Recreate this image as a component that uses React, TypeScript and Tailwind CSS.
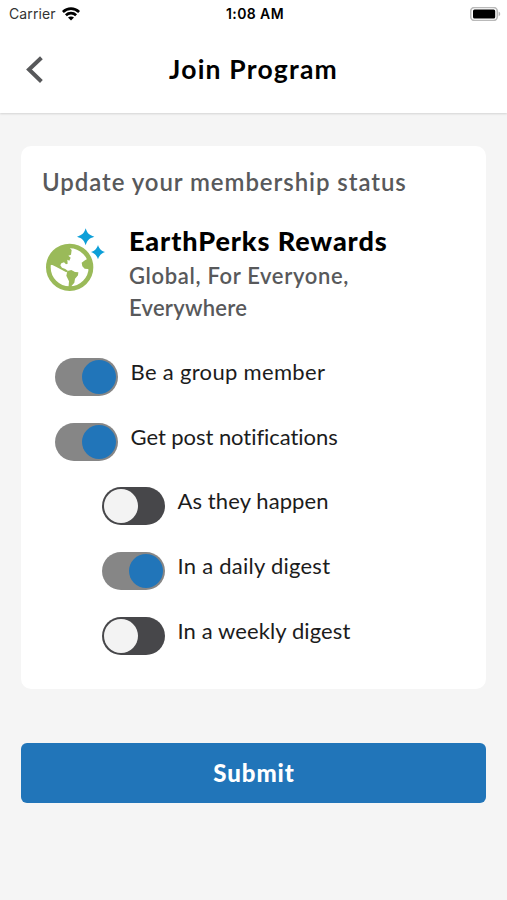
import { useState } from "react";

type Option = {
  id: string;
  label: string;
  nested?: boolean;
  spacing: string;
};

const options: Option[] = [
  { id: "member", label: "Be a group member", spacing: "tracking-[0.32px]" },
  { id: "posts", label: "Get post notifications", spacing: "tracking-[-0.05px]" },
  { id: "instant", label: "As they happen", nested: true, spacing: "tracking-[0.1px]" },
  { id: "daily", label: "In a daily digest", nested: true, spacing: "tracking-[0.25px]" },
  { id: "weekly", label: "In a weekly digest", nested: true, spacing: "tracking-[0.1px]" },
];

function StatusBar() {
  return (
    <div className="grid h-[27px] grid-cols-3 items-center pl-[9px] pr-[6px] font-['Inter',sans-serif] text-[14px] text-black">
      <div className="flex items-center gap-[6px] text-[#333]">
        <span className="tracking-[0.1px]">Carrier</span>
        <svg className="h-[14px] w-[18px]" viewBox="0 0 18 14" fill="none" stroke="#000" strokeWidth="2.7">
          <path d="M.9 5C5.6.6 12.4.6 17.1 5" />
          <path d="M3.9 8.2c2.9-2.8 7.3-2.8 10.2 0" />
          <path d="M9 13.6 6 10.6c1.6-1.5 4.4-1.5 6 0Z" fill="#000" stroke="none" />
        </svg>
      </div>
      <span className="text-center font-semibold tracking-[0.4px]">1:08 AM</span>
      <svg className="h-[14px] w-[31px] justify-self-end" viewBox="0 0 31 14">
        <rect x=".7" y=".4" width="26.6" height="13.2" rx="4" fill="#fff" stroke="#b9b9b9" strokeWidth="1.6" />
        <rect x="3" y="2.4" width="22.2" height="9.2" rx="1.5" fill="#000" />
        <path d="M28.7 4.8c2 .6 2 3.8 0 4.4Z" fill="#b5b5b5" />
      </svg>
    </div>
  );
}

function Header() {
  return (
    <header className="h-[113px] bg-white shadow-[0_1px_2px_rgba(0,0,0,0.14)]">
      <StatusBar />
      <div className="grid h-[86px] grid-cols-[60px_1fr_60px] items-center">
        <button type="button" aria-label="Back" className="flex justify-start pl-[26px]">
          <svg className="h-7 w-[18px]" viewBox="0 0 18 28" fill="none" stroke="#57585a" strokeWidth="4">
            <path d="M15.4 1.8 3 13.5l12.4 12" strokeLinejoin="miter" />
          </svg>
        </button>
        <h1 className="text-center text-[26.5px] font-bold tracking-[1.2px] text-black">Join Program</h1>
      </div>
    </header>
  );
}

function EarthIcon() {
  return (
    <svg className="h-[68px] w-[62px]" viewBox="24 18 186 204">
      <circle cx="101" cy="142" r="64" fill="#fff" stroke="#9aba59" strokeWidth="14" />
      <g fill="#9aba59">
        <path d="M38 134 42 110 58 92 78 80 100 79 102 85 107 90 105 104 97 107 104 113 100 122 94 119 95 131 90 133 84 127 76 130 73 136 78 143 88 147 96 153 91 157 74 148 60 140 49 135Z" />
        <path d="M94 153 106 150 117 156 127 157 126 166 117 176 115 188 107 197 106 208 97 206 99 184 91 167Z" />
        <path d="M164 111 147 121 137 128 139 139 146 146 156 147 166 153Z" />
      </g>
      <g fill="#0d9fd8">
        <path d="M149 25C154 40 159 45 175 50 159 55 154 60 149 76 144 60 139 55 123 50 139 45 144 40 149 25Z" />
        <path d="M186 75C190 87 195 92 207 96 195 101 190 106 186 118 182 106 177 101 165 96 177 92 182 87 186 75Z" />
      </g>
    </svg>
  );
}

type ToggleProps = {
  checked: boolean;
  label: string;
  onChange: () => void;
};

function Toggle({ checked, label, onChange }: ToggleProps) {
  return (
    <button
      type="button"
      role="switch"
      aria-checked={checked}
      aria-label={label}
      onClick={onChange}
      className={`flex h-[38px] w-[62.5px] shrink-0 items-center rounded-full px-[2px] ${
        checked ? "justify-end bg-[#868686]" : "justify-start bg-[#47474a]"
      }`}
    >
      <span className={`size-[34px] rounded-full ${checked ? "bg-[#2175b9]" : "bg-[#f3f3f3]"}`} />
    </button>
  );
}

export default function App() {
  const [enabled, setEnabled] = useState<Record<string, boolean>>({
    member: true,
    posts: true,
    daily: true,
  });

  const toggle = (id: string) => setEnabled({ ...enabled, [id]: !enabled[id] });

  return (
    <div className="min-h-screen bg-[#f5f5f5] font-['Lato',sans-serif]">
      <Header />

      <main className="px-[21px] pt-[33px]">
        <section className="h-[543px] rounded-[10px] bg-white pt-[20px]">
          <h2 className="pl-[21px] text-2xl font-semibold tracking-[0.93px] text-[#58595b]">
            Update your membership status
          </h2>

          <div className="mt-[26px] flex pl-[23px]">
            <div className="w-[85px] pt-[2px]">
              <EarthIcon />
            </div>
            <div>
              <h3 className="pt-px text-[27px] leading-8 font-black tracking-[0.9px] text-black">EarthPerks Rewards</h3>
              <p className="mt-[3px] w-[260px] text-[22px] leading-8 font-semibold text-[#58595b]">
                <span className="tracking-[0.65px]">Global, For Everyone,</span>
                <br />
                <span className="tracking-[0.25px]">Everywhere</span>
              </p>
            </div>
          </div>

          <ul className="mt-[33.9px] flex flex-col gap-[26.8px]">
            {options.map(({ id, label, nested, spacing }) => (
              <li key={id} className={`flex h-[38px] gap-[13px] ${nested ? "pl-[81px]" : "pl-[34px]"}`}>
                <Toggle checked={!!enabled[id]} label={label} onChange={() => toggle(id)} />
                <span className={`text-[22px] leading-[28px] text-[#1c1c1c] ${spacing}`}>{label}</span>
              </li>
            ))}
          </ul>
        </section>

        <button
          type="submit"
          className="mt-[54px] h-[60px] w-full rounded-[6px] bg-[#2175b9] pl-px text-2xl font-black tracking-[0.9px] text-white"
        >
          Submit
        </button>
      </main>
    </div>
  );
}
